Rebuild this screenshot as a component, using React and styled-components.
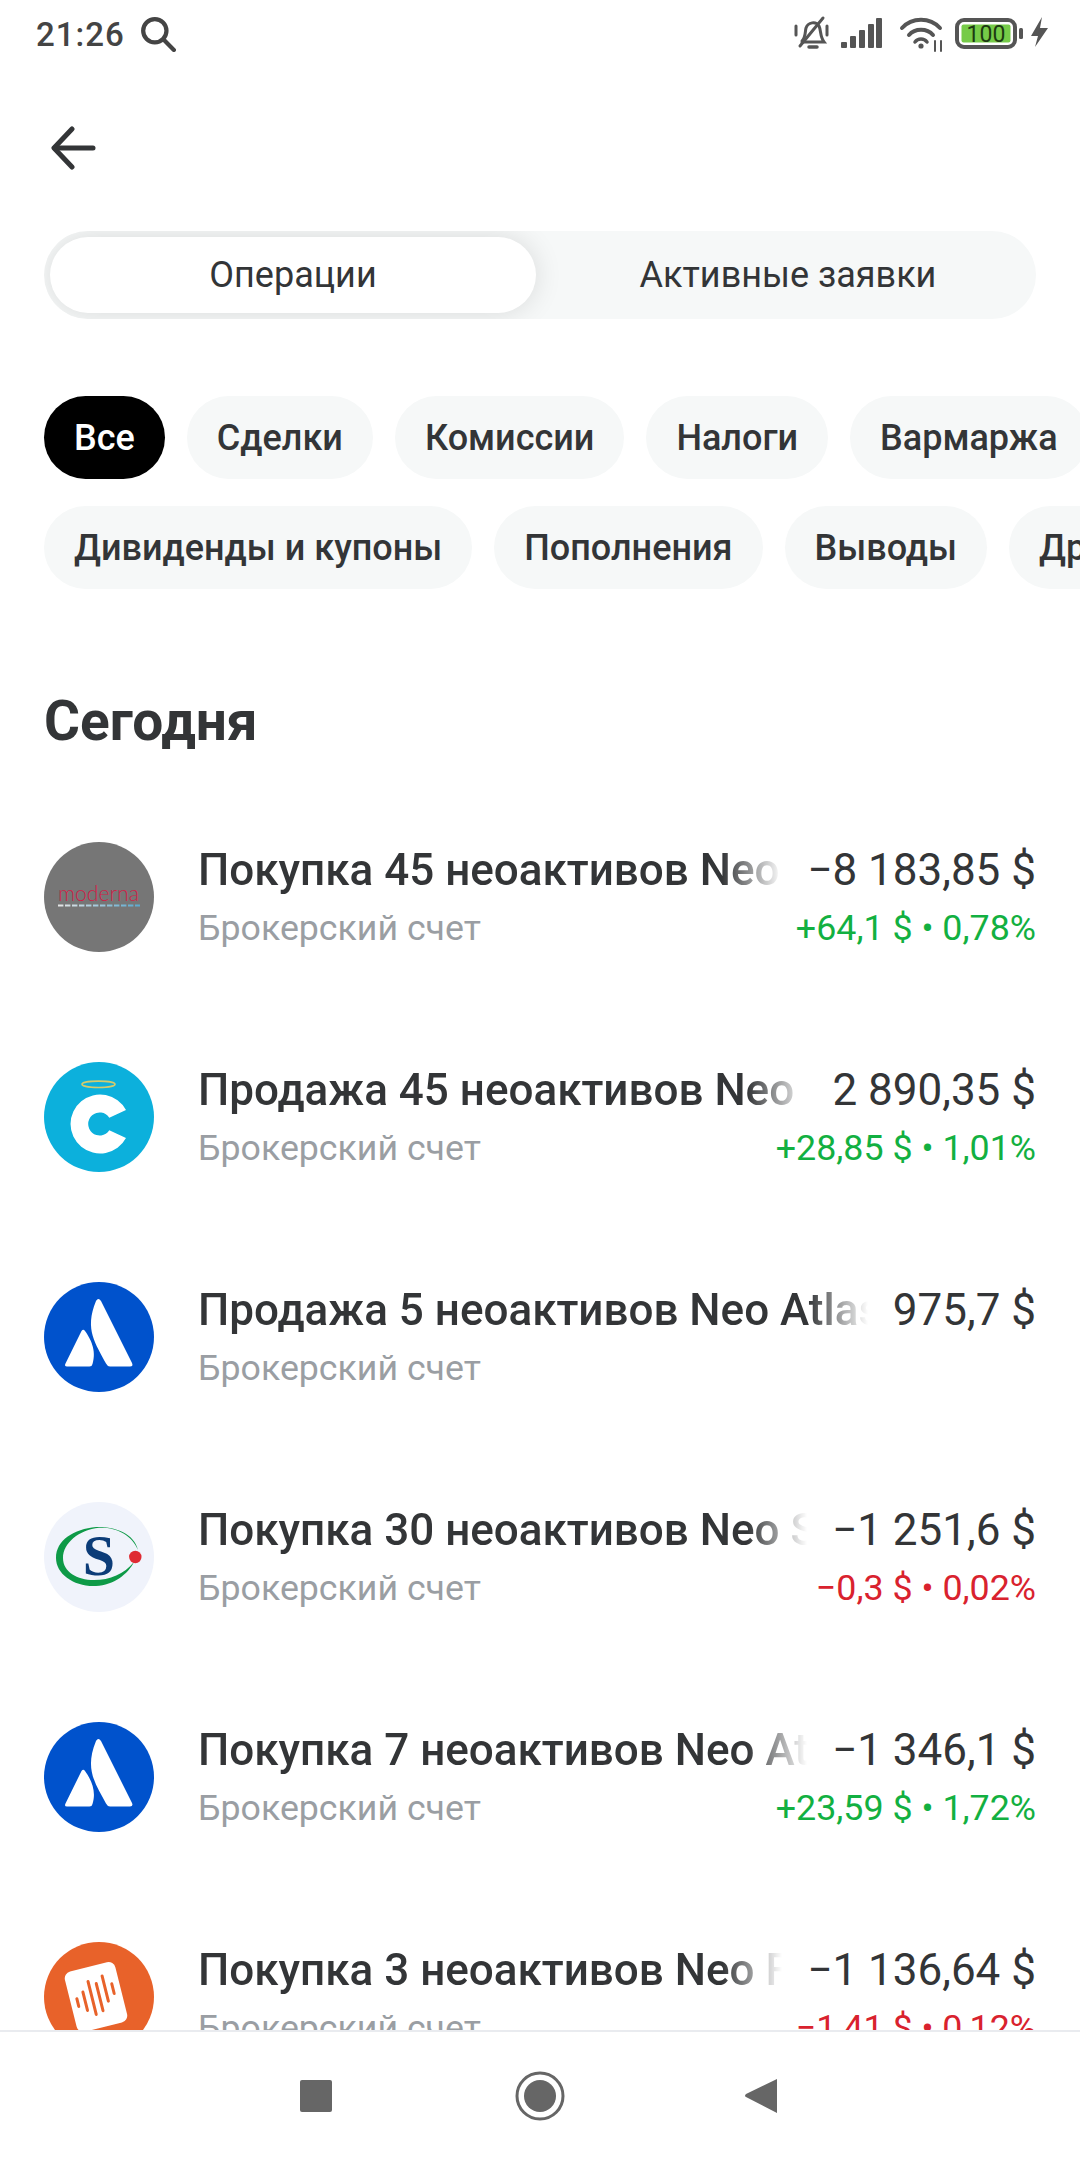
import React from "react";
import styled, { createGlobalStyle } from "styled-components";

const GlobalStyle = createGlobalStyle`
  html, body {
    margin: 0;
    padding: 0;
    background: #fff;
  }
  * {
    box-sizing: border-box;
  }
`;

const Page = styled.div`
  width: 1080px;
  height: 2160px;
  display: flex;
  flex-direction: column;
  overflow: hidden;
  background: #fff;
  font-family: Roboto, "Noto Sans", sans-serif;
  color: #333537;
`;

const StatusBar = styled.div`
  flex: none;
  height: 68px;
  padding: 0 26px 0 36px;
  display: flex;
  align-items: center;
  justify-content: space-between;
  color: #555;
`;

const StatusLeft = styled.div`
  display: flex;
  align-items: center;
  gap: 15px;
`;

const Time = styled.span`
  font-size: 33px;
  font-weight: 500;
  letter-spacing: 1px;
  color: #444;
`;

const StatusRight = styled.div`
  display: flex;
  align-items: center;
`;

const Content = styled.div`
  flex: 1;
  min-height: 0;
  overflow: hidden;
`;

const BackButton = styled.div`
  height: 163px;
  padding: 58px 0 0 50px;
`;

const Tabs = styled.div`
  margin: 0 44px;
  height: 88px;
  padding: 6px 0 6px 6px;
  display: flex;
  border-radius: 44px;
  background: #f6f8f8;
  overflow: hidden;
`;

const Tab = styled.div`
  flex: ${(p) => (p.$active ? "none" : "1")};
  width: ${(p) => (p.$active ? "486px" : "auto")};
  padding-left: ${(p) => (p.$active ? "0" : "4px")};
  display: flex;
  align-items: center;
  justify-content: center;
  font-size: 36px;
  border-radius: 38px;
  color: #333537;
  background: ${(p) => (p.$active ? "#fff" : "transparent")};
  box-shadow: ${(p) => (p.$active ? "0 0 28px rgba(0, 0, 0, 0.12)" : "none")};
`;

const Chips = styled.div`
  margin-top: 77px;
  display: flex;
  flex-direction: column;
  gap: 27px;
`;

const ChipRow = styled.div`
  display: flex;
  gap: 22px;
  padding-left: 44px;
  white-space: nowrap;
`;

const Chip = styled.div`
  flex: none;
  height: 83px;
  padding: 0 30px;
  display: flex;
  align-items: center;
  border-radius: 42px;
  font-size: 36px;
  font-weight: 500;
  color: ${(p) => (p.$active ? "#fff" : "#333537")};
  background: ${(p) => (p.$active ? "#000" : "#f6f8f8")};
`;

const Heading = styled.h2`
  margin: 100px 0 0 44px;
  font-size: 55px;
  line-height: 64px;
  font-weight: 700;
  color: #333537;
`;

const List = styled.div`
  margin-top: 89px;
  padding: 0 44px;
  display: flex;
  flex-direction: column;
  gap: 110px;
`;

const Row = styled.div`
  height: 110px;
  display: flex;
  align-items: center;
`;

const Avatar = styled.svg`
  flex: none;
  width: 110px;
  height: 110px;
  margin-right: 44px;
`;

const Body = styled.div`
  flex: 1;
  min-width: 0;
  display: flex;
  flex-direction: column;
  gap: 10px;
`;

const Line = styled.div`
  display: flex;
  justify-content: space-between;
  gap: 25px;
`;

const Title = styled.div`
  flex: 1;
  min-width: 0;
  font-size: 44px;
  line-height: 52px;
  font-weight: 500;
  white-space: nowrap;
  overflow: hidden;
  color: #333537;
  -webkit-mask-image: linear-gradient(to right, #000 calc(100% - 60px), transparent);
  mask-image: linear-gradient(to right, #000 calc(100% - 60px), transparent);
`;

const Sub = styled.div`
  font-size: 35.7px;
  line-height: 44px;
  white-space: nowrap;
  color: #9a9ea3;
`;

const Amount = styled.div`
  flex: none;
  font-size: 44px;
  line-height: 52px;
  white-space: nowrap;
  color: #333537;
`;

const Change = styled.div`
  flex: none;
  font-size: 35.8px;
  line-height: 44px;
  white-space: nowrap;
  color: ${(p) => (p.$negative ? "#d9222e" : "#12b041")};
`;

const NavBar = styled.div`
  flex: none;
  height: 130px;
  display: flex;
  align-items: center;
  justify-content: center;
  border-top: 2px solid #e9ebef;
  background: #fff;
`;

const NavSlot = styled.div`
  width: 221px;
  padding-right: ${(p) => p.$inset || 0}px;
  display: flex;
  justify-content: center;
`;

const ModernaLogo = () => (
  <Avatar viewBox="0 0 110 110">
    <defs>
      <linearGradient id="modernaDash" gradientUnits="userSpaceOnUse" x1="14" x2="96" y1="0" y2="0">
        <stop offset="0" stopColor="#e6e6e6" />
        <stop offset="1" stopColor="#5aa9cf" />
      </linearGradient>
    </defs>
    <circle cx="55" cy="55" r="55" fill="#767676" />
    <text x="54.5" y="59" textAnchor="middle" fontFamily="Lato, sans-serif" fontWeight="300" fontSize="21" fill="#cf2148" textLength="81" lengthAdjust="spacingAndGlyphs">moderna</text>
    <line x1="14" y1="63.5" x2="96" y2="63.5" stroke="url(#modernaDash)" strokeWidth="1.8" strokeDasharray="5.4 1.6" />
  </Avatar>
);

const HaloLogo = () => (
  <Avatar viewBox="0 0 110 110">
    <circle cx="55" cy="55" r="55" fill="#0cb0dc" />
    <ellipse cx="54.5" cy="22.3" rx="16.5" ry="3.2" fill="none" stroke="#d5cb6c" strokeWidth="1.6" />
    <path d="M82 48 A29.5 29.5 0 1 0 82 76 L65.3 68.3 A11.5 11.5 0 1 1 65.3 55.7 Z" fill="#fff" />
  </Avatar>
);

const AtlasLogo = () => (
  <Avatar viewBox="0 0 110 110">
    <circle cx="55" cy="55" r="55" fill="#0052cc" />
    <path d="M52 19 Q54.3 15 57 19 L88 81 Q89.5 84.5 86 84.5 L66 84.5 Q63.5 84.5 62 81.5 C52 62 40 48 52 19 Z" fill="#fff" />
    <path d="M37.5 49 Q39.3 46.5 41 49 C46 56 53 68 48.5 82 Q48 84.5 45.5 84.5 L23 84.5 Q20 84.5 21.5 81.5 Z" fill="#fff" />
  </Avatar>
);

const SLogo = () => (
  <Avatar viewBox="0 0 110 110">
    <circle cx="55" cy="55" r="55" fill="#f0f3fb" />
    <path d="M94 48 C90 30 68 24 52 25 C30 27 12 38 12 56 C12 72 30 85 52 84 C70 83 84 72 90 60 C80 72 66 78 50 78 C33 78 19 70 19 56 C19 41 35 28 55 25.8 C72 25 88 33 94 48 Z" fill="#0e9a47" />
    <text x="55" y="73" textAnchor="middle" fontFamily="'Liberation Serif', serif" fontWeight="700" fontSize="58" fill="#0c3c78">S</text>
    <circle cx="91.3" cy="55" r="6.2" fill="#df2a32" />
  </Avatar>
);

const WaveLogo = () => (
  <Avatar viewBox="0 0 110 110">
    <circle cx="55" cy="55" r="55" fill="#e8622a" />
    <g transform="rotate(-14 52 55)">
      <rect x="26" y="24" width="52" height="62" rx="7" fill="#fff" />
      <g stroke="#e8622a" strokeWidth="3" strokeLinecap="round">
        <line x1="33" y1="52" x2="33" y2="60" />
        <line x1="40.5" y1="47" x2="40.5" y2="66" />
        <line x1="48" y1="38" x2="48" y2="72" />
        <line x1="55.5" y1="42" x2="55.5" y2="70" />
        <line x1="63" y1="36" x2="63" y2="62" />
        <line x1="70.5" y1="46" x2="70.5" y2="56" />
      </g>
    </g>
  </Avatar>
);

const operations = [
  { title: "Покупка 45 неоактивов Neo Moderna", amount: "−8 183,85 $", change: "+64,1 $ • 0,78%", Logo: ModernaLogo },
  { title: "Продажа 45 неоактивов Neo C", amount: "2 890,35 $", change: "+28,85 $ • 1,01%", Logo: HaloLogo },
  { title: "Продажа 5 неоактивов Neo Atlassian", amount: "975,7 $", change: "", Logo: AtlasLogo },
  { title: "Покупка 30 неоактивов Neo S", amount: "−1 251,6 $", change: "−0,3 $ • 0,02%", negative: true, Logo: SLogo },
  { title: "Покупка 7 неоактивов Neo Atlassian", amount: "−1 346,1 $", change: "+23,59 $ • 1,72%", Logo: AtlasLogo },
  { title: "Покупка 3 неоактивов Neo F", amount: "−1 136,64 $", change: "−1,41 $ • 0,12%", negative: true, Logo: WaveLogo },
];

const firstChips = ["Сделки", "Комиссии", "Налоги", "Вармаржа"];
const secondChips = ["Дивиденды и купоны", "Пополнения", "Выводы", "Другое"];

const StatusIcons = () => (
  <StatusRight>
    <svg width="260" height="40" viewBox="0 0 260 40">
      <g transform="translate(0,2)" fill="none" stroke="#555" strokeWidth="3" strokeLinecap="round">
        <path d="M8 25 C12 21 11 15 12 12 C14 6 22 5 25 10 C27 14 26 21 30 26 L8 26" />
        <path d="M6 30 L29 2" />
        <path d="M2 10 V19 M33 10 V19" />
        <path d="M15 31 H23" strokeWidth="3.5" />
      </g>
      <g transform="translate(47,4)" fill="#555">
        <rect x="0" y="24" width="6" height="6" rx="1" />
        <rect x="9" y="18" width="6" height="12" rx="1" />
        <rect x="18" y="12" width="6" height="18" rx="1" />
        <rect x="27" y="6" width="6" height="24" rx="1" />
        <rect x="35" y="0" width="6" height="30" rx="1" />
      </g>
      <g transform="translate(106,3)" fill="none" stroke="#555" strokeWidth="4" strokeLinecap="round">
        <path d="M2 11 C12 0 30 0 40 11" />
        <path d="M9 18 C15 11 27 11 33 18" />
        <path d="M15 25 C18 21 24 21 27 25" strokeWidth="3.5" />
        <circle cx="21" cy="29" r="2.6" fill="#555" stroke="none" />
        <path d="M35 24 V34 M41 24 V34" strokeWidth="2" />
      </g>
      <g transform="translate(161,4)">
        <rect x="2" y="2" width="58" height="27" rx="7" fill="none" stroke="#555" strokeWidth="4" />
        <rect x="6.5" y="6.5" width="49" height="18" rx="2" fill="#76cb48" />
        <text x="31" y="24" textAnchor="middle" fontFamily="Roboto, sans-serif" fontSize="23" fill="#1d3a12">100</text>
        <rect x="64" y="10" width="4" height="11" rx="1.5" fill="#555" />
      </g>
      <path d="M248 3 L237 22 H244 L241 33 L254 14 H246 Z" fill="#555" />
    </svg>
  </StatusRight>
);

const App = () => {
  return (
    <>
      <GlobalStyle />
      <Page>
        <StatusBar>
          <StatusLeft>
            <Time>21:26</Time>
            <svg width="36" height="36" viewBox="0 0 34 34" fill="none" stroke="#444" strokeWidth="4" strokeLinecap="round">
              <circle cx="14" cy="14" r="11" />
              <path d="M22 22 L32 32" />
            </svg>
          </StatusLeft>
          <StatusIcons />
        </StatusBar>
        <Content>
          <BackButton>
            <svg width="46" height="44" viewBox="0 0 46 44" fill="none" stroke="#333537" strokeWidth="5" strokeLinecap="round" strokeLinejoin="round">
              <path d="M22 3 L4 22 L22 41" />
              <path d="M5 22 H43" />
            </svg>
          </BackButton>
          <Tabs>
            <Tab $active>Операции</Tab>
            <Tab>Активные заявки</Tab>
          </Tabs>
          <Chips>
            <ChipRow>
              <Chip $active>Все</Chip>
              {firstChips.map((c) => (
                <Chip key={c}>{c}</Chip>
              ))}
            </ChipRow>
            <ChipRow>
              {secondChips.map((c) => (
                <Chip key={c}>{c}</Chip>
              ))}
            </ChipRow>
          </Chips>
          <Heading>Сегодня</Heading>
          <List>
            {operations.map((op) => (
              <Row key={op.title}>
                <op.Logo />
                <Body>
                  <Line>
                    <Title>{op.title}</Title>
                    <Amount>{op.amount}</Amount>
                  </Line>
                  <Line>
                    <Sub>Брокерский счет</Sub>
                    <Change $negative={op.negative}>{op.change}</Change>
                  </Line>
                </Body>
              </Row>
            ))}
          </List>
        </Content>
        <NavBar>
          <NavSlot $inset={6}>
            <svg width="32" height="32" viewBox="0 0 32 32">
              <rect width="32" height="32" rx="2" fill="#666" />
            </svg>
          </NavSlot>
          <NavSlot>
            <svg width="50" height="50" viewBox="0 0 50 50">
              <circle cx="25" cy="25" r="23" fill="none" stroke="#666" strokeWidth="3" />
              <circle cx="25" cy="25" r="16" fill="#666" />
            </svg>
          </NavSlot>
          <NavSlot>
            <svg width="32" height="36" viewBox="0 0 32 36">
              <path d="M32 1 V35 L1 19 Q-1 18 1 16 Z" fill="#666" />
            </svg>
          </NavSlot>
        </NavBar>
      </Page>
    </>
  );
};

export default App;
